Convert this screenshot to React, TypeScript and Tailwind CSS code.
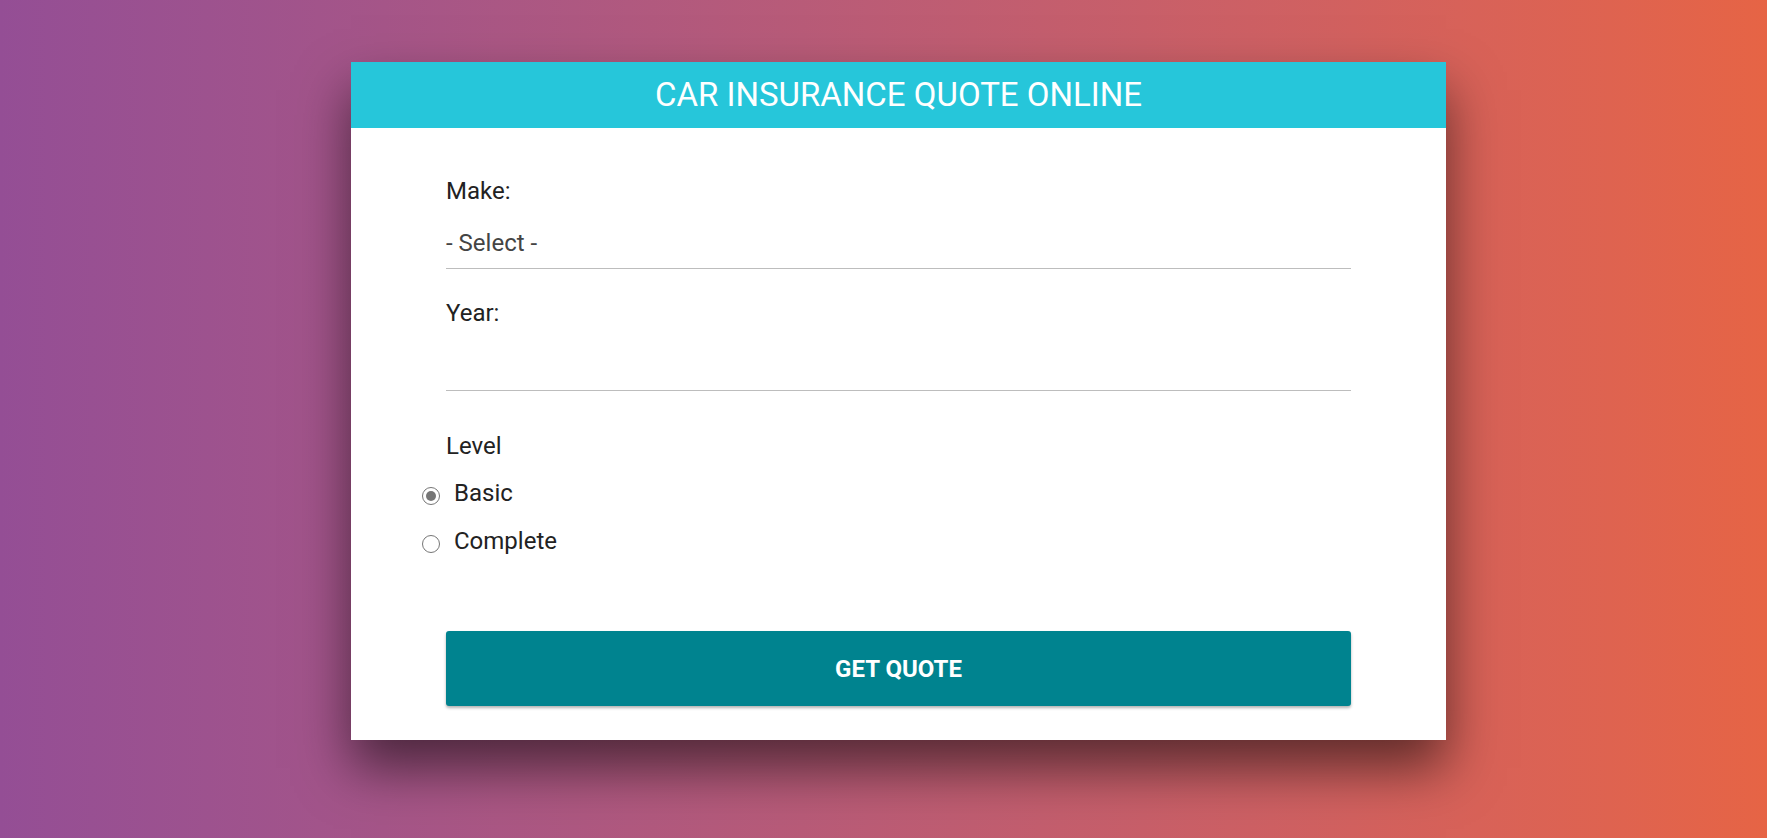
import React from "react";

export default function App() {
  return (
    <div
      className="w-full h-[838px] overflow-hidden bg-gradient-to-r from-[#944e95] to-[#e66445] pt-[62px]"
      style={{ fontFamily: "Roboto, 'Liberation Sans', sans-serif" }}
    >
      <div className="ml-[351px] w-[1095px] h-[678px] bg-white shadow-[0_28px_50px_rgba(0,0,0,0.55)] flex flex-col">
        <div className="h-[66px] bg-[#26c6da] flex items-center justify-center">
          <h1 className="text-[33px] leading-[38px] text-white font-normal">
            CAR INSURANCE QUOTE ONLINE
          </h1>
        </div>
        <div className="px-[95px] pt-[49px] flex flex-col">
          <label className="text-[24px] leading-[28px] text-[#222]">Make:</label>
          <div className="h-[64px] border-b border-[#bdbdbd] pt-[24px] text-[24px] leading-[28px] text-[#444]">
            - Select -
          </div>
          <label className="mt-[30px] text-[24px] leading-[28px] text-[#222]">Year:</label>
          <div className="h-[64px] border-b border-[#bdbdbd]"></div>
          <div className="mt-[41px] text-[24px] leading-[28px] text-[#222]">Level</div>
          <div className="mt-[9px] flex flex-col">
            <div className="relative h-[48px] flex items-center pl-[8px] text-[24px] text-[#222]">
              <span className="absolute left-[-24px] top-[18px] w-[18px] h-[18px] rounded-full border border-[#767676] flex items-center justify-center">
                <span className="w-[10px] h-[10px] rounded-full bg-[#767676]"></span>
              </span>
              Basic
            </div>
            <div className="relative h-[48px] flex items-center pl-[8px] text-[24px] text-[#222]">
              <span className="absolute left-[-24px] top-[18px] w-[18px] h-[18px] rounded-full border border-[#767676]"></span>
              Complete
            </div>
          </div>
          <button className="mt-[66px] h-[75px] w-full rounded-[3px] bg-[#00838f] text-white text-[24px] font-bold shadow-[0_2px_3px_rgba(0,0,0,0.3)]">
            GET QUOTE
          </button>
        </div>
      </div>
    </div>
  );
}
